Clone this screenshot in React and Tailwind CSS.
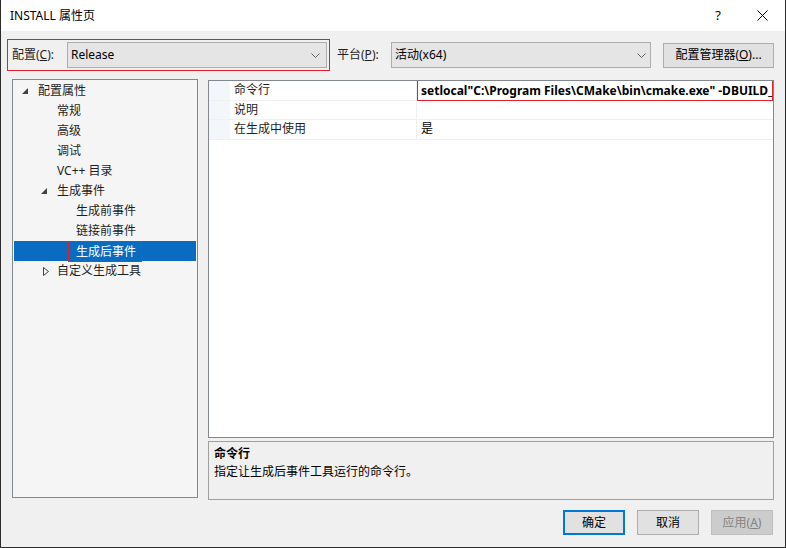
import React from "react";

const font = { fontFamily: '"Noto Sans", "Noto Sans CJK SC", sans-serif' };

function Chevron() {
  return (
    <svg width="9" height="5" viewBox="0 0 9 5" className="shrink-0">
      <path d="M0.5 0.5 L4.5 4.5 L8.5 0.5" fill="none" stroke="#606060" strokeWidth="1" />
    </svg>
  );
}

function ExpandedTri() {
  return (
    <svg width="6" height="6" viewBox="0 0 6 6" className="shrink-0">
      <polygon points="6,0 6,6 0,6" fill="#404040" />
    </svg>
  );
}

function CollapsedTri() {
  return (
    <svg width="6" height="9" viewBox="0 0 6 9" className="shrink-0 ml-[2px]">
      <polygon points="0.5,0.5 5.5,4.5 0.5,8.5" fill="none" stroke="#404040" strokeWidth="1" />
    </svg>
  );
}

function TreeRow({ indent, icon, label, selected, boxed }) {
  return (
    <div className={`h-[20px] flex items-center ${selected ? "bg-[#0a6cc0] text-white" : "text-[#1e1e1e]"}`}>
      <div className="flex items-center justify-start w-[15px] shrink-0" style={{ marginLeft: indent }}>
        {icon}
      </div>
      {boxed ? (
        <span className="ml-[-7px] h-[21px] mt-[1px] pl-[7px] pr-[5px] border border-[#e0202a] flex items-center leading-none">{label}</span>
      ) : (
        <span className="ml-[1px] leading-none">{label}</span>
      )}
    </div>
  );
}

function GridRow({ name, value, bold, boxed }) {
  return (
    <div className="h-[19.5px] flex border-b border-[#f0f0f0]">
      <div className="w-[21px] shrink-0 bg-[#f3f6fb]" />
      <div className="w-[187px] shrink-0 border-r border-[#f0f0f0] pl-[4px] flex items-center text-[#1e1e1e]">{name}</div>
      <div className={`flex-1 min-w-0 flex items-center overflow-hidden whitespace-nowrap ${boxed ? "border border-[#e0202a] -mt-[1px] h-[21px] pl-[3px]" : "pl-[4px]"} ${bold ? "font-bold" : ""} text-[#000]`}>
        {value}
      </div>
    </div>
  );
}

export default function App() {
  return (
    <div className="w-[786px] h-[548px] bg-[#f0f0f0] border-l border-r border-b border-[#2b2b2b] flex flex-col text-[12px] overflow-hidden" style={font}>
      {/* title bar */}
      <div className="h-[31px] bg-white flex items-center shrink-0">
        <span className="ml-[9px] text-[12px] text-black">INSTALL 属性页</span>
        <div className="flex-1" />
        <span className="text-[13px] text-black mr-[36px]">?</span>
        <svg width="11" height="11" viewBox="0 0 11 11" className="mr-[17px]">
          <path d="M0.5 0.5 L10.5 10.5 M10.5 0.5 L0.5 10.5" stroke="#000" strokeWidth="1" />
        </svg>
      </div>

      {/* config row */}
      <div className="flex items-center mt-[8px] h-[32px] shrink-0">
        <div className="ml-[6px] w-[323px] h-[32px] border border-[#e0202a] flex items-center">
          <span className="ml-[4px] w-[55px] text-[#1e1e1e]">
            配置(<span className="underline">C</span>):
          </span>
          <div className="w-[260px] h-[26px] bg-[#e5e5e5] border border-[#adadad] flex items-center pl-[3px] pr-[6px]">
            <span className="flex-1">Release</span>
            <Chevron />
          </div>
        </div>
        <span className="ml-[7px] w-[54px] text-[#1e1e1e]">
          平台(<span className="underline">P</span>):
        </span>
        <div className="w-[260px] h-[26px] bg-[#e5e5e5] border border-[#adadad] flex items-center pl-[3px] pr-[4px]">
          <span className="flex-1">活动(x64)</span>
          <Chevron />
        </div>
        <div className="ml-[12px] w-[111px] h-[25px] bg-[#e1e1e1] border border-[#adadad] flex items-center justify-center">
          配置管理器(<span className="underline">O</span>)...
        </div>
      </div>

      {/* main area */}
      <div className="flex mt-[8px] shrink-0">
        <div className="ml-[11px] w-[186px] h-[419px] bg-[#f5f5f5] border border-[#828790] pt-[1px] pl-[1px] pr-[1px]">
          <TreeRow indent={8} icon={<ExpandedTri />} label="配置属性" />
          <TreeRow indent={27} label="常规" />
          <TreeRow indent={27} label="高级" />
          <TreeRow indent={27} label="调试" />
          <TreeRow indent={27} label="VC++ 目录" />
          <TreeRow indent={27} icon={<ExpandedTri />} label="生成事件" />
          <TreeRow indent={46} label="生成前事件" />
          <TreeRow indent={46} label="链接前事件" />
          <TreeRow indent={46} selected boxed label="生成后事件" />
          <TreeRow indent={27} icon={<CollapsedTri />} label="自定义生成工具" />
        </div>

        <div className="ml-[10px] flex flex-col">
          <div className="w-[566px] h-[358px] mt-[1px] bg-white border border-[#828790] overflow-hidden">
            <GridRow name="命令行" bold boxed value={'setlocal"C:\\Program Files\\CMake\\bin\\cmake.exe"  -DBUILD_TYPE=Release -P cmake_install.cmake'} />
            <GridRow name="说明" value="" />
            <GridRow name="在生成中使用" value="是" />
          </div>
          <div className="w-[566px] h-[59px] mt-[3px] bg-[#f0f0f0] border border-[#a0a0a0] px-[5px] pt-[3px]">
            <div className="font-bold leading-[18px]">命令行</div>
            <div className="leading-[18px]">指定让生成后事件工具运行的命令行。</div>
          </div>
        </div>
      </div>

      {/* buttons */}
      <div className="flex justify-end mt-[10px] mr-[12px] gap-[12px] shrink-0">
        <div className="w-[62px] h-[25px] bg-[#e1e1e1] border-2 border-[#0078d7] flex items-center justify-center text-black">确定</div>
        <div className="w-[62px] h-[25px] bg-[#e1e1e1] border border-[#adadad] flex items-center justify-center text-black">取消</div>
        <div className="w-[62px] h-[25px] bg-[#cccccc] border border-[#bfbfbf] flex items-center justify-center text-[#838383]">
          应用(<span className="underline">A</span>)
        </div>
      </div>
    </div>
  );
}
